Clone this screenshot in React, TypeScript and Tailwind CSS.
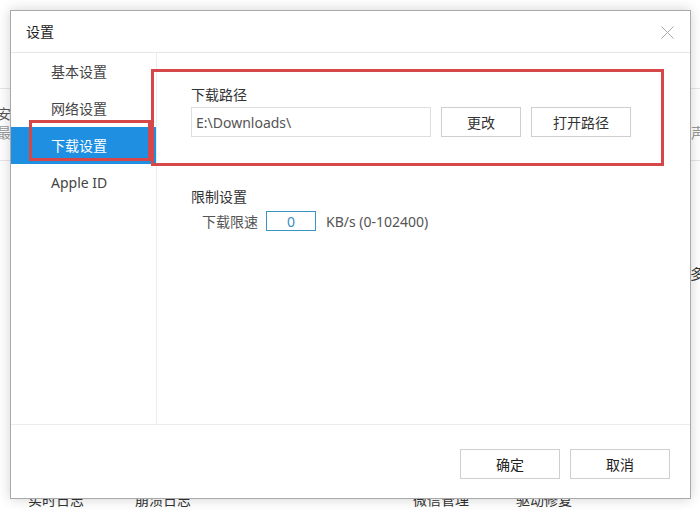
const navItems = ["基本设置", "网络设置", "下载设置", "Apple ID"]

export default function App() {
    const active = 2

    return (
        <div
            className="relative w-[700px] h-[510px] overflow-hidden bg-white text-[14px] text-[#333]"
            style={{ fontFamily: '"Noto Sans", "Noto Sans CJK SC", sans-serif' }}
        >
            {/* page behind the dialog */}
            <div className="flex flex-col h-full">
                <div className="h-[88px]" />
                <div className="h-[73px] border-y border-[#e6e6e6] flex justify-between">
                    <div className="ml-[-3px] pt-[15px] leading-[19px] whitespace-nowrap">
                        <div className="text-[#555]">安装</div>
                        <div className="text-[#999]">最近</div>
                    </div>
                    <div className="pt-[34px] pl-[1px] leading-[19px] text-[#999] w-[10px] whitespace-nowrap">声音</div>
                </div>
                <div className="flex justify-end h-[329px]">
                    <div className="mt-[103px] w-[10px] whitespace-nowrap leading-[19px]">多</div>
                </div>
                <div className="flex leading-[20px] whitespace-nowrap">
                    <span className="ml-[28px]">实时日志</span>
                    <span className="ml-[51px]">崩溃日志</span>
                    <span className="ml-[222px]">微信管理</span>
                    <span className="ml-[47px]">驱动修复</span>
                </div>
            </div>

            {/* dialog */}
            <div className="absolute left-[10px] top-[10px] w-[681px] h-[489px] bg-white border border-[#a9a9a9] shadow-[0_0_12px_rgba(0,0,0,0.18)] flex flex-col">
                <div className="h-[42px] shrink-0 border-b border-[#e6e6e6] flex items-center justify-between pl-[15px] pr-[16px]">
                    <span className="text-[#222]">设置</span>
                    <svg width="13" height="13" viewBox="0 0 13 13" className="mt-[1px]">
                        <path d="M0.5 0.5 L12.5 12.5 M12.5 0.5 L0.5 12.5" stroke="#a8a8a8" strokeWidth="1" fill="none" />
                    </svg>
                </div>

                <div className="flex h-[371px] shrink-0">
                    <div className="w-[146px] border-r border-[#ececec] flex flex-col">
                        {navItems.map((item, i) => (
                            <div
                                key={item}
                                className={`h-[37px] flex items-center pl-[40px] ${i === active ? "bg-[#1e8fe1] text-white" : "text-[#444]"}`}
                            >
                                {item}
                            </div>
                        ))}
                    </div>

                    <div className="flex-1 pl-[34px] pt-[32px]">
                        <div className="leading-[20px]">下载路径</div>
                        <div className="flex mt-[2px] gap-[10px]">
                            <div className="w-[240px] h-[30px] border border-[#dedede] flex items-center pl-[4px] text-[#555]">
                                E:\Downloads\
                            </div>
                            <button className="w-[80px] h-[30px] border border-[#cfcfcf] bg-white text-[#333]">更改</button>
                            <button className="w-[100px] h-[30px] border border-[#cfcfcf] bg-white text-[#333]">打开路径</button>
                        </div>

                        <div className="leading-[20px] mt-[50px]">限制设置</div>
                        <div className="flex items-center h-[24px] mt-[2px] pl-[11px] text-[#555]">
                            <span>下载限速</span>
                            <div className="ml-[8px] w-[50px] h-[20px] border border-[#3c94c4] text-[#3c8cb8] flex items-center justify-center">0</div>
                            <span className="ml-[10px]">KB/s (0-102400)</span>
                        </div>
                    </div>
                </div>

                <div className="flex-1 border-t border-[#ececec] flex justify-end items-start pt-[24px] pr-[20px] gap-[10px]">
                    <button className="w-[100px] h-[30px] border border-[#cfcfcf] bg-white text-[#222]">确定</button>
                    <button className="w-[100px] h-[30px] border border-[#cfcfcf] bg-white text-[#222]">取消</button>
                </div>
            </div>

            {/* red annotation boxes */}
            <div className="absolute left-[29px] top-[120px] w-[122px] h-[41px] border-[3px] border-[#d6474a]" />
            <div className="absolute left-[151px] top-[69px] w-[513px] h-[97px] border-[3px] border-[#d6474a]" />
        </div>
    )
}
